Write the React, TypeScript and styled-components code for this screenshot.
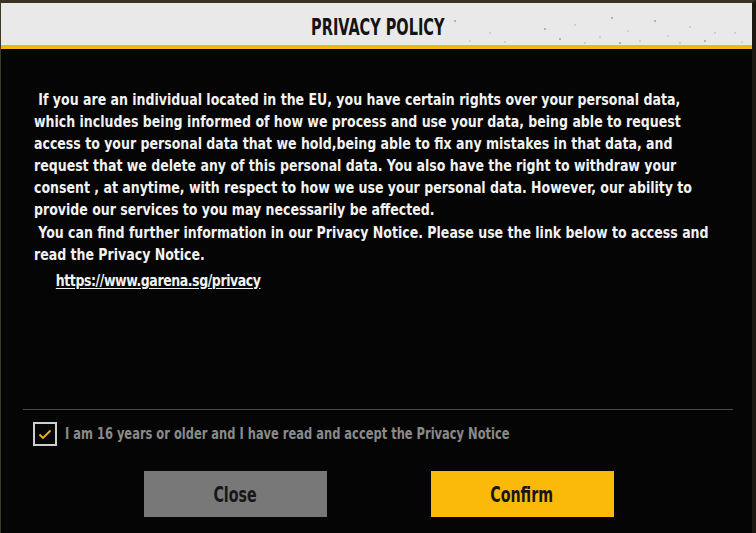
import React, { useState } from "react";
import styled, { createGlobalStyle } from "styled-components";

const GlobalStyle = createGlobalStyle`
  html, body {
    margin: 0;
    padding: 0;
    background: #050505;
  }
  * {
    box-sizing: border-box;
  }
`;

const FONT = `"DejaVu Sans Condensed", "Liberation Sans", sans-serif`;

const lines = [
  " If you are an individual located in the EU, you have certain rights over your personal data,",
  "which includes being informed of how we process and use your data, being able to request",
  "access to your personal data that we hold,being able to fix any mistakes in that data, and",
  "request that we delete any of this personal data. You also have the right to withdraw your",
  "consent , at anytime, with respect to how we use your personal data. However, our ability to",
  "provide our services to you may necessarily be affected.",
  " You can find further information in our Privacy Notice. Please use the link below to access and",
  "read the Privacy Notice.",
];

const specks = [
  [455, 18], [470, 38], [490, 30], [560, 36], [575, 22], [600, 34], [612, 15],
  [628, 28], [640, 38], [655, 18], [668, 33], [690, 24], [705, 38], [735, 30],
  [585, 40], [545, 26], [505, 39], [742, 39], [620, 40], [680, 40], [715, 30],
];

function App() {
  const [checked, setChecked] = useState(true);

  return (
    <>
      <GlobalStyle />
      <Frame>
        <Header>
          <Title>PRIVACY POLICY</Title>
          <Specks width="756" height="43" viewBox="0 0 756 43">
            {specks.map(([x, y], i) => (
              <circle key={i} cx={x} cy={y} r={i % 3 === 0 ? 1.1 : 0.7} fill="#7a7a7a" opacity={0.6} />
            ))}
          </Specks>
        </Header>

        <Body>
          <Content>
            {lines.map((line, i) => (
              <Line key={i}>{line}</Line>
            ))}
            <Link href="#">https://www.garena.sg/privacy</Link>
          </Content>
        </Body>

        <Divider />

        <Agree onClick={() => setChecked((prev) => !prev)}>
          <CheckBox>
            {checked && (
              <svg width="14" height="11" viewBox="0 0 14 11">
                <path d="M1.5 5.5 L5 9 L12.5 1.5" stroke="#f0b21c" strokeWidth="1.8" fill="none" />
              </svg>
            )}
          </CheckBox>
          <AgreeText>I am 16 years or older and I have read and accept the Privacy Notice</AgreeText>
        </Agree>

        <Buttons>
          <Button $variant="close">
            <ButtonLabel>Close</ButtonLabel>
          </Button>
          <Button $variant="confirm">
            <ButtonLabel>Confirm</ButtonLabel>
          </Button>
        </Buttons>
      </Frame>
    </>
  );
}

export default App;

const Frame = styled.div`
  position: relative;
  display: flex;
  flex-direction: column;
  width: 756px;
  height: 533px;
  overflow: hidden;

  background: #050505;
  border-top: 3px solid #3a3222;
  border-left: 1px solid #3c3a24;
  border-right: 4px solid #1c1810;

  font-family: ${FONT};
`;

const Header = styled.div`
  position: relative;
  display: flex;
  justify-content: center;
  align-items: center;
  height: 46px;
  flex-shrink: 0;

  background: #e9e9e9;
  border-bottom: 4px solid #f3b414;
`;

const Title = styled.h1`
  margin: 0;
  padding: 6px 0 0 3px;
  transform: scaleX(0.7);

  font-family: ${FONT};
  font-weight: 700;
  font-size: 23px;
  color: #141414;
`;

const Specks = styled.svg`
  position: absolute;
  left: -1px;
  top: 0;
  pointer-events: none;
`;

const Body = styled.div`
  height: 360px;
  flex-shrink: 0;
  padding: 40px 0 0 33px;
`;

const Content = styled.div`
  display: flex;
  flex-direction: column;
  transform: scaleX(0.872);
  transform-origin: left top;
`;

const Line = styled.span`
  white-space: pre;
  font-weight: 700;
  font-size: 16px;
  line-height: 22.1px;
  color: #f2f2f2;
`;

const Link = styled.a`
  align-self: flex-start;
  margin: 4px 0 0 25px;

  font-weight: 700;
  font-size: 16px;
  line-height: 22px;
  letter-spacing: -0.5px;
  color: #f2f2f2;
  text-decoration: underline;
  text-underline-offset: 2px;
`;

const Divider = styled.div`
  height: 1px;
  margin: 0 19px 0 22px;
  background: #4a4a4a;
`;

const Agree = styled.label`
  display: flex;
  align-items: center;
  gap: 8px;
  padding: 12px 0 0 32px;
  cursor: pointer;
`;

const CheckBox = styled.span`
  display: flex;
  justify-content: center;
  align-items: center;
  width: 24px;
  height: 24px;
  flex-shrink: 0;

  border: 2px solid #cfcfcf;
`;

const AgreeText = styled.span`
  white-space: nowrap;
  transform: scaleX(0.85);
  transform-origin: left center;

  font-weight: 700;
  font-size: 15px;
  color: #8a8a8a;
`;

const Buttons = styled.div`
  display: flex;
  justify-content: center;
  gap: 104px;
  padding-top: 25px;
  padding-left: 4px;
`;

const Button = styled.button<{ $variant: "close" | "confirm" }>`
  display: flex;
  justify-content: center;
  align-items: center;
  width: 183px;
  height: 46px;
  padding: 0;

  border: none;
  background: ${({ $variant }) => ($variant === "confirm" ? "#fbb909" : "#787878")};
  cursor: pointer;
`;

const ButtonLabel = styled.span`
  display: inline-block;
  transform: scaleX(0.72);

  font-family: ${FONT};
  font-weight: 700;
  font-size: 22px;
  color: #161616;
`;
